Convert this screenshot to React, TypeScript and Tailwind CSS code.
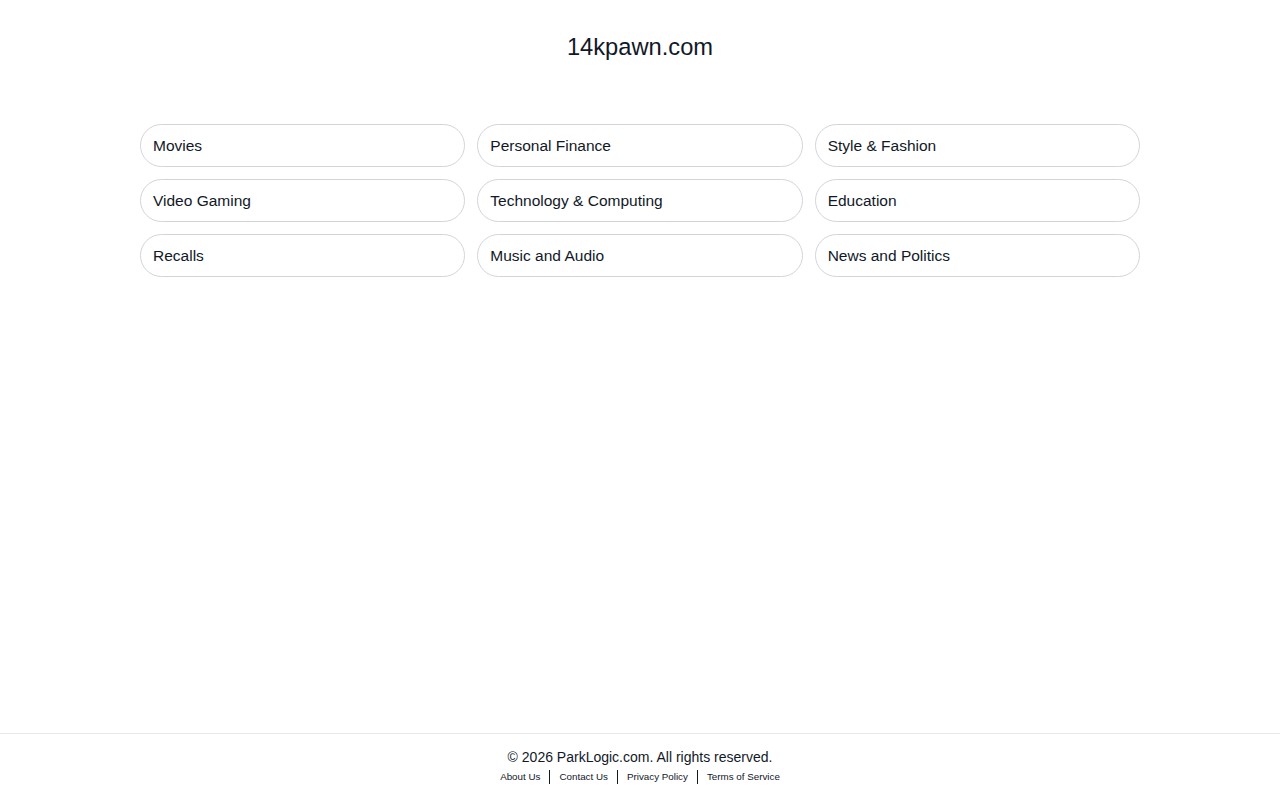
import React from 'react';

const categories = [
  'Movies',
  'Personal Finance',
  'Style & Fashion',
  'Video Gaming',
  'Technology & Computing',
  'Education',
  'Recalls',
  'Music and Audio',
  'News and Politics',
];

const footerLinks = ['About Us', 'Contact Us', 'Privacy Policy', 'Terms of Service'];

export default function App() {
  return (
    <div className="min-h-screen flex flex-col bg-white text-[#111827] font-['Liberation_Sans',Arial,sans-serif]">
      <main className="flex-1">
        <h1 className="text-center text-[23.7px] leading-[30px] pt-[32px]">14kpawn.com</h1>

        <div className="mx-auto w-[1000px] mt-[62px] grid grid-cols-3 gap-x-[12px] gap-y-[12px]">
          {categories.map((c) => (
            <a
              key={c}
              href="#"
              className="h-[43px] flex items-center px-[12px] rounded-full border border-[#d1d5db] text-[15.5px] text-[#111827]"
            >
              {c}
            </a>
          ))}
        </div>
      </main>

      <footer className="h-[67px] border-t border-[#e5e7eb] flex flex-col items-center pt-[14px]">
        <p className="text-[14px] leading-[18px] text-[#111827]">© 2026 ParkLogic.com. All rights reserved.</p>
        <div className="flex items-center mt-[4px] text-[9.8px] leading-[14px]">
          {footerLinks.map((l, i) => (
            <React.Fragment key={l}>
              {i > 0 && <span className="w-px h-[14px] bg-[#111827] mx-[9px]" />}
              <a href="#" className="text-[#111827]">{l}</a>
            </React.Fragment>
          ))}
        </div>
      </footer>
    </div>
  );
}
